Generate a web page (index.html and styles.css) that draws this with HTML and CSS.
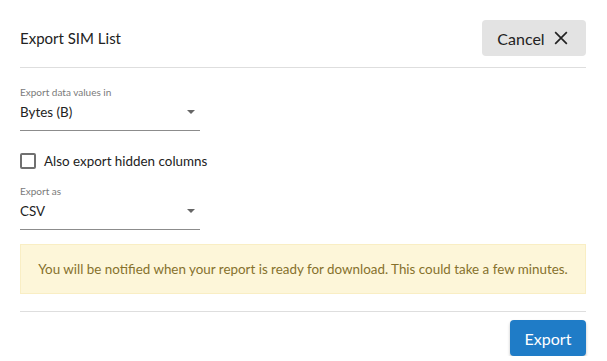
FILE: index.html
```html
<!DOCTYPE html>
<html lang="en">
<head>
    <meta charset="UTF-8">
    <meta name="viewport" content="width=device-width, initial-scale=1.0">
    <title>Export SIM List</title>
    <link rel="stylesheet" href="styles.css">
</head>
<body>
    <div class="dialog">
        <header class="dialog-header">
            <div class="dialog-title">Export SIM List</div>
            <button class="cancel-button">
                Cancel
                <svg viewBox="0 0 24 24" fill="none" stroke="currentColor">
                    <path stroke-width="2" d="M5 5l14 14M19 5L5 19"/>
                </svg>
            </button>
        </header>

        <main class="dialog-body">
            <div class="field">
                <div class="field-label">Export data values in</div>
                <div class="select">
                    <span>Bytes (B)</span>
                    <span class="caret"></span>
                </div>
            </div>

            <label class="checkbox-row">
                <span class="checkbox"></span>
                Also export hidden columns
            </label>

            <div class="field">
                <div class="field-label">Export as</div>
                <div class="select">
                    <span>CSV</span>
                    <span class="caret"></span>
                </div>
            </div>

            <div class="notice">
                You will be notified when your report is ready for download. This could take a few minutes.
            </div>
        </main>

        <footer class="dialog-footer">
            <button class="export-button">Export</button>
        </footer>
    </div>
</body>
</html>
```

FILE: styles.css
```css
:root {
    --text-color: #222;
    --muted-color: #7a7a7a;
    --line-color: #dedede;
    --primary-color: #1f7cc7;
    --notice-bg: #fdf6d9;
    --notice-border: #f9eec4;
    --notice-text: #86712c;
}

* {
    margin: 0;
    padding: 0;
    box-sizing: border-box;
    font-family: 'Lato', 'Open Sans', sans-serif;
}

body {
    background-color: white;
    color: var(--text-color);
}

.dialog {
    padding: 0 21px 0 20px;
}

.dialog-header {
    display: flex;
    align-items: center;
    justify-content: space-between;
    padding: 20px 0 11px;
    border-bottom: 1px solid var(--line-color);
}

.dialog-title {
    font-size: 15px;
}

.cancel-button {
    display: flex;
    align-items: center;
    gap: 6px;
    width: 104px;
    height: 36px;
    justify-content: center;
    background-color: #e3e3e3;
    color: var(--text-color);
    border: none;
    border-radius: 4px;
    font-size: 16px;
    cursor: pointer;
}

.cancel-button svg {
    width: 20px;
    height: 20px;
}

.dialog-body {
    padding-top: 18px;
}

.field {
    width: 180px;
}

.field-label {
    font-size: 10px;
    color: var(--muted-color);
    line-height: 13px;
}

.select {
    display: flex;
    align-items: center;
    justify-content: space-between;
    font-size: 13.4px;
    height: 32px;
    padding: 0 5px 5px 0;
    border-bottom: 1px solid #8c8c8c;
}

.caret {
    width: 0;
    height: 0;
    border-left: 4px solid transparent;
    border-right: 4px solid transparent;
    border-top: 4px solid #666;
}

.checkbox-row {
    display: flex;
    align-items: center;
    gap: 8px;
    font-size: 13.4px;
    margin: 22px 0 16px;
}

.checkbox {
    width: 16px;
    height: 16px;
    border: 2px solid #707070;
    border-radius: 2px;
}

.notice {
    margin-top: 14px;
    margin-bottom: 17px;
    height: 50px;
    display: flex;
    align-items: center;
    justify-content: center;
    background-color: var(--notice-bg);
    border: 1px solid var(--notice-border);
    color: var(--notice-text);
    font-size: 13.4px;
}

.dialog-footer {
    display: flex;
    justify-content: flex-end;
    padding-top: 8px;
    border-top: 1px solid var(--line-color);
}

.export-button {
    width: 76px;
    height: 36px;
    background-color: var(--primary-color);
    color: white;
    border: none;
    border-radius: 4px;
    font-size: 16px;
    box-shadow: 0 2px 3px rgba(0, 0, 0, 0.25);
    cursor: pointer;
}
```
